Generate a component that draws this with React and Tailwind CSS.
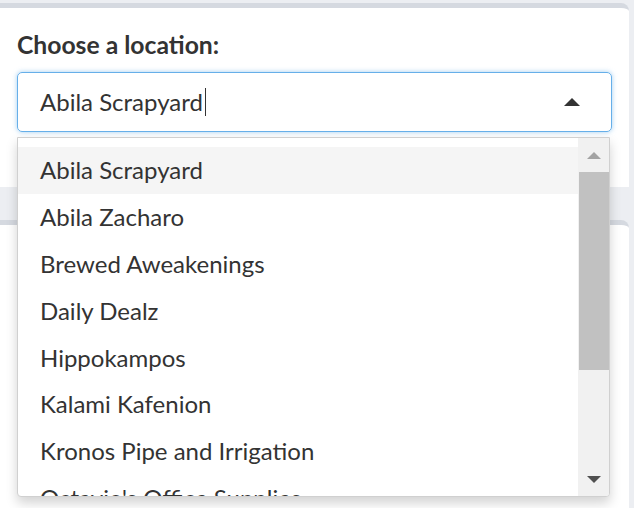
import React from 'react';

const locations = [
  'Abila Scrapyard',
  'Abila Zacharo',
  'Brewed Aweakenings',
  'Daily Dealz',
  'Hippokampos',
  'Kalami Kafenion',
  'Kronos Pipe and Irrigation',
  "Octavio's Office Supplies",
];

const font = { fontFamily: '"Source Sans Pro", Lato, "Noto Sans", sans-serif' };

export default function App() {
  return (
    <div className="w-[634px] h-[508px] overflow-hidden bg-[#eceef2] pt-[3px] relative" style={font}>
      {/* top card */}
      <div className="mr-[5px] bg-white rounded-tr-lg border-t-[5px] border-[#d5d9e0] h-[184px] px-[17px] pt-[25px]">
        <label className="block text-[24.7px] font-bold text-[#333] leading-none">Choose a location:</label>
        <div className="mt-[14px] h-[60px] border border-[#66afe9] rounded-[5px] shadow-[0_0_5px_rgba(102,175,233,0.6)] flex items-center pl-[22px] pr-[31px]">
          <span className="text-[24px] text-[#333] leading-none">Abila Scrapyard</span>
          <span className="w-px h-[28px] bg-[#333] ml-[2px]" />
          <span className="ml-auto w-0 h-0 border-l-[8px] border-r-[8px] border-b-[8px] border-l-transparent border-r-transparent border-b-[#333]" />
        </div>
      </div>

      {/* second card */}
      <div className="mt-[33px] mr-[5px] bg-white rounded-tr-lg border-t-[5px] border-[#d5d9e0] h-[300px] flex flex-col justify-end">
        <div className="h-[11px] bg-[#e9e9e9] flex">
          <div className="w-[209px]" />
          <div className="w-[66px] bg-gradient-to-r from-[#2d0c57] to-[#6a1b77]" />
          <div className="w-[89px] border-r border-[#d0d0d0]" />
          <div className="w-[121px] border-r border-[#d0d0d0]" />
        </div>
      </div>

      {/* dropdown menu */}
      <div className="absolute left-[17px] top-[137px] w-[593px] h-[360px] bg-white border border-[#d0d0d0] rounded-b-[4px] shadow-[0_6px_12px_rgba(0,0,0,0.175)] flex overflow-hidden">
        <div className="flex-1 pt-[9px] overflow-hidden">
          {locations.map((loc, i) => (
            <div
              key={loc}
              className={`h-[46.8px] flex items-center pl-[22px] text-[24px] leading-none text-[#333] whitespace-nowrap ${i === 0 ? 'bg-[#f5f5f5]' : ''}`}
            >
              {loc}
            </div>
          ))}
        </div>
        <div className="w-[31px] bg-[#f1f1f1] flex flex-col items-center">
          <div className="h-[34px] flex items-center justify-center">
            <span className="w-0 h-0 border-l-[7px] border-r-[7px] border-b-[7px] border-l-transparent border-r-transparent border-b-[#a3a3a3]" />
          </div>
          <div className="w-[30px] h-[198px] bg-[#c1c1c1]" />
          <div className="flex-1" />
          <div className="h-[34px] flex items-center justify-center">
            <span className="w-0 h-0 border-l-[7px] border-r-[7px] border-t-[7px] border-l-transparent border-r-transparent border-t-[#505050]" />
          </div>
        </div>
      </div>
    </div>
  );
}
